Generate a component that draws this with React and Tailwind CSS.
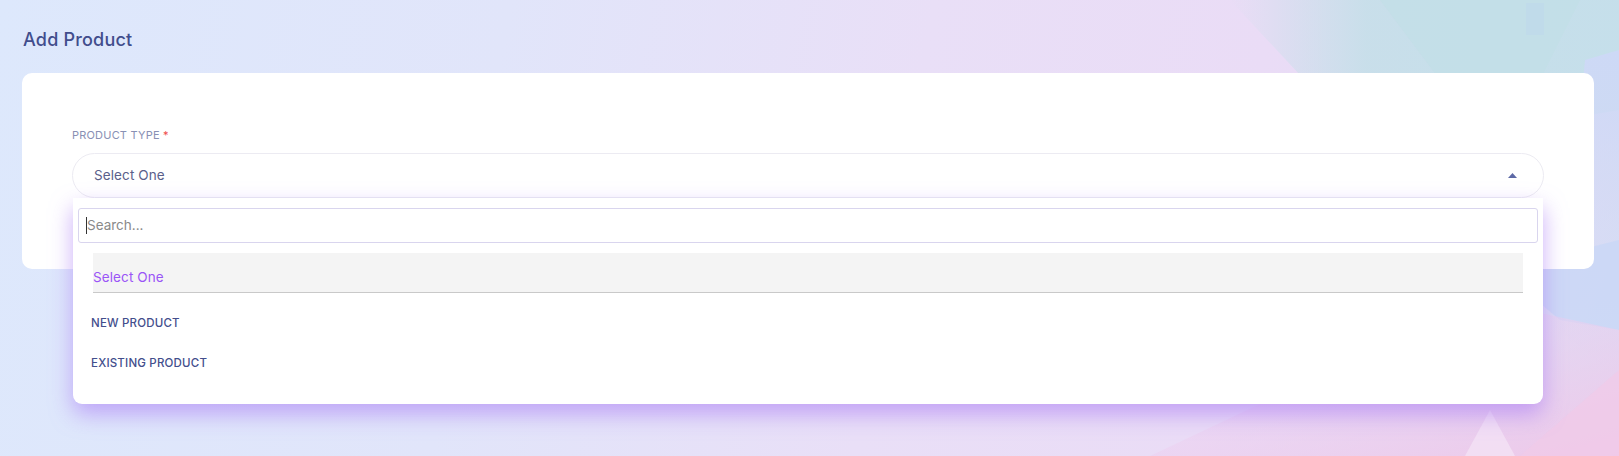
import React from "react";

export default function App() {
  return (
    <div
      className="relative w-[1619px] h-[456px] overflow-hidden"
      style={{ fontFamily: "Inter, 'Open Sans', sans-serif" }}
    >
      {/* background */}
      <div className="absolute inset-0 bg-[linear-gradient(100deg,#dde8fc_0%,#e1e5fa_30%,#e9dff7_55%,#eadcf6_75%,#e4ddf5_88%,#d6dff3_100%)]" />
      <svg className="absolute inset-0" width="1619" height="456" viewBox="0 0 1619 456">
        <defs>
          <linearGradient id="teal" x1="0" y1="0" x2="1" y2="0">
            <stop offset="0" stopColor="#c3e0e8" stopOpacity="0" />
            <stop offset="0.35" stopColor="#c3dfe8" stopOpacity="0.85" />
            <stop offset="1" stopColor="#c4dfea" stopOpacity="0.95" />
          </linearGradient>
          <linearGradient id="pinkb" x1="0" y1="0" x2="1" y2="1">
            <stop offset="0" stopColor="#ead6f6" stopOpacity="0" />
            <stop offset="1" stopColor="#f0c6e8" stopOpacity="0.95" />
          </linearGradient>
          <linearGradient id="bluer" x1="0" y1="0" x2="0" y2="1">
            <stop offset="0" stopColor="#cdd9f6" stopOpacity="1" />
            <stop offset="1" stopColor="#d8d6f5" stopOpacity="0" />
          </linearGradient>
        </defs>
        <polygon points="1230,0 1619,0 1619,110 1560,120 1420,90 1300,75" fill="url(#teal)" />
        <polygon points="1380,0 1580,0 1500,160" fill="#c0dfe6" opacity="0.5" />
        <polygon points="1585,60 1619,50 1619,380 1560,330" fill="url(#bluer)" />
        <polygon points="1500,270 1619,240 1619,330 1560,320" fill="#c9d7f6" opacity="0.8" />
        <polygon points="1150,456 1480,300 1619,330 1619,456" fill="url(#pinkb)" />
        <polygon points="1465,456 1490,410 1515,456" fill="#f3e0f4" opacity="0.9" />
        <polygon points="1520,456 1619,370 1619,456" fill="#f1cbe8" opacity="0.7" />
        <rect x="1526" y="3" width="18" height="32" fill="#b6d0ee" opacity="0.25" />
      </svg>

      <div className="relative px-[22px] pt-[28px] pr-[25px]">
        <h1 className="text-[18px] leading-[24px] font-medium text-[#414d8c] tracking-[0.2px] ml-[1px]">
          Add Product
        </h1>

        <div className="mt-[21px] bg-white rounded-[10px] pt-[55px] pb-[71px] px-[50px]">
          <div className="text-[11px] leading-[14px] text-[#8990b4] tracking-[0.2px] uppercase">
            Product Type <span className="text-[#ef4c4c]">*</span>
          </div>
          <div className="relative mt-[11px]">
            <div className="h-[45px] rounded-full border border-[#ecebf2] flex items-center justify-between pl-[21px] pr-[26px]">
              <span className="text-[13.5px] text-[#5a608a] tracking-[0.1px]">Select One</span>
              <svg width="9" height="5" viewBox="0 0 9 5">
                <polygon points="0,5 4.5,0 9,5" fill="#5d69a6" />
              </svg>
            </div>

            {/* dropdown */}
            <div className="absolute left-[1px] right-[1px] top-[45px] h-[206px] bg-white rounded-b-[9px] shadow-[0_10px_22px_rgba(168,120,245,0.6)] z-10">
              <div className="mx-[5px] mt-[10px] h-[35px] border border-[#d9d5ee] rounded-[3px] flex items-center pl-[7px]">
                <span className="w-px h-[17px] bg-[#333]" />
                <span className="text-[13.5px] text-[#8a8a8a]">Search...</span>
              </div>
              <div className="mx-[20px] mt-[10px] h-[40px] bg-[#f4f4f4] border-b border-[#c9c9c9] flex items-end pb-[5px]">
                <span className="text-[13.5px] leading-[20px] text-[#9a55f7] tracking-[0.1px]">Select One</span>
              </div>
              <div className="pl-[18px] mt-[23px] text-[11.5px] font-medium text-[#434e8c] leading-[14px] tracking-[0.2px]">
                NEW PRODUCT
              </div>
              <div className="pl-[18px] mt-[26px] text-[11.5px] font-medium text-[#434e8c] leading-[14px] tracking-[0.2px]">
                EXISTING PRODUCT
              </div>
            </div>
          </div>
        </div>
      </div>
    </div>
  );
}
